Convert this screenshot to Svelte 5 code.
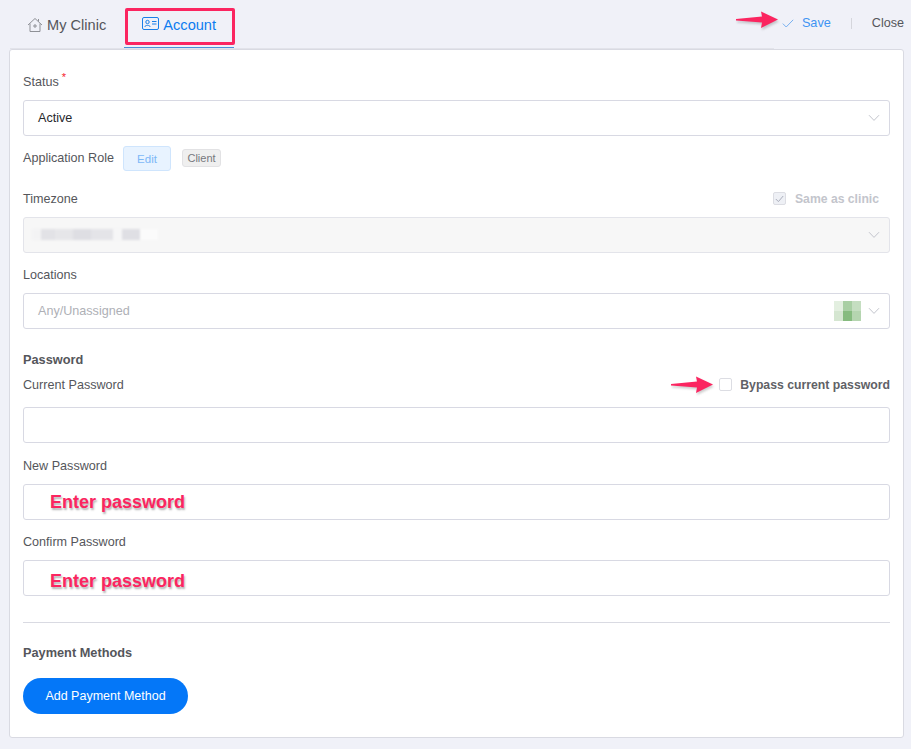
<script>
  const mosaic = ['#e3efe0', '#a9cfa4', '#c5dec1', '#d5e6d1', '#86bb7f', '#b5d5b0'];
  const redact = [
    { w: 9, c: '#f3f3f4' }, { w: 14, c: '#e2e2e6' }, { w: 18, c: '#e6e6e9' }, { w: 18, c: '#dedee3' },
    { w: 22, c: '#e4e4e8' }, { w: 9, c: '#f6f6f7' }, { w: 18, c: '#dfdfe4' }, { w: 18, c: '#fbfbfb' }
  ];
</script>

{#snippet chevron()}
  <svg class="chevron" width="12" height="8" viewBox="0 0 12 8"><path d="M1 1.2 L6 6.4 L11 1.2" fill="none" stroke="#c3c5cd" stroke-width="1"/></svg>
{/snippet}

{#snippet arrow()}
  <svg class="arrow" width="42" height="17" viewBox="0 0 42 17">
    <path d="M0 8 L26 5.5 L25 0.5 L42 8.5 L25 17 L26 11.5 L0 9.5 Z" fill="#fb2560"/>
  </svg>
{/snippet}

<div class="page">
  <header class="topbar">
    <nav class="tabs">
      <div class="tab">
        <svg width="16" height="16" viewBox="0 0 16 16" fill="none" stroke="#8f9197" stroke-width="1">
          <path d="M1 8 L8 1.5 L15 8 M3 6.5 V14.5 H13 V6.5 M11.5 2 V4.5"/>
          <path d="M8 7 V11 M6 9 H10"/>
        </svg>
        <span>My Clinic</span>
      </div>
      <div class="tab active">
        <svg width="17" height="13" viewBox="0 0 17 13" fill="none" stroke="#1a7fe8" stroke-width="1">
          <rect x="0.5" y="0.5" width="16" height="12" rx="1.5"/>
          <circle cx="5.5" cy="5" r="1.7"/>
          <path d="M2.8 10 C3 7.8 8 7.8 8.2 10 M10 4.5 H14.5 M10 7 H14.5"/>
        </svg>
        <span>Account</span>
        <div class="highlight"></div>
      </div>
    </nav>
    <div class="actions">
      <div class="save-arrow">{@render arrow()}</div>
      <svg width="12" height="9" viewBox="0 0 12 9"><path d="M0.8 4.6 L4.2 8 L11.2 0.8" fill="none" stroke="#78b0f0" stroke-width="1"/></svg>
      <span class="save">Save</span>
      <span class="divider"></span>
      <span class="close">Close</span>
    </div>
  </header>

  <main class="card">
    <div class="label status-label">Status<sup>*</sup></div>
    <div class="field">
      <span class="value">Active</span>
      {@render chevron()}
    </div>

    <div class="role-row">
      <span class="label">Application Role</span>
      <span class="edit-btn">Edit</span>
      <span class="client-tag">Client</span>
    </div>

    <div class="label-row tz-row">
      <span class="label">Timezone</span>
      <div class="check-wrap">
        <span class="box checked">
          <svg width="9" height="8" viewBox="0 0 9 8"><path d="M0.8 4 L3.4 6.6 L8.2 1" fill="none" stroke="#a9adbb" stroke-width="1"/></svg>
        </span>
        <span class="same">Same as clinic</span>
      </div>
    </div>
    <div class="field disabled">
      <div class="redacted">
        {#each redact as r}
          <i style="width:{r.w}px;background:{r.c}"></i>
        {/each}
      </div>
      {@render chevron()}
    </div>

    <div class="label loc-label">Locations</div>
    <div class="field">
      <span class="placeholder">Any/Unassigned</span>
      <div class="field-end">
        <div class="mosaic">
          {#each mosaic as c}
            <i style="background:{c}"></i>
          {/each}
        </div>
        {@render chevron()}
      </div>
    </div>

    <div class="heading pw-heading">Password</div>
    <div class="label-row cur-row">
      <span class="label">Current Password</span>
      <div class="check-wrap bypass">
        <div class="bypass-arrow">{@render arrow()}</div>
        <span class="box"></span>
        <span class="bypass-text">Bypass current password</span>
      </div>
    </div>
    <div class="field"></div>

    <div class="label pw-label">New Password</div>
    <div class="field"><span class="note">Enter password</span></div>

    <div class="label pw-label confirm">Confirm Password</div>
    <div class="field"><span class="note low">Enter password</span></div>

    <hr />

    <div class="heading">Payment Methods</div>
    <button class="add-btn">Add Payment Method</button>
  </main>
</div>

<style>
  :global(body) {
    margin: 0;
    background: #f0f1f8;
  }

  .page {
    height: 749px;
    font-family: "Liberation Sans", Arial, sans-serif;
    font-size: 13px;
    color: #55565b;
    overflow: hidden;
  }

  .topbar {
    display: flex;
    justify-content: space-between;
    height: 49px;
    padding: 0 7px 0 27px;
    box-sizing: border-box;
  }

  .tabs {
    display: flex;
  }

  .tab {
    display: flex;
    align-items: flex-start;
    gap: 4px;
    height: 48px;
    padding-top: 17px;
    box-sizing: border-box;
    font-size: 14.6px;
    color: #55565b;
  }

  .tab.active {
    position: relative;
    margin-left: 18px;
    width: 110px;
    justify-content: center;
    color: #0d7cf0;
    border-bottom: 1px solid #4a90d9;
  }

  .tab svg {
    flex: none;
  }

  .highlight {
    position: absolute;
    left: 1px;
    top: 8px;
    width: 110px;
    height: 37px;
    box-sizing: border-box;
    border: 3px solid #fb2560;
    border-radius: 2px;
  }

  .actions {
    display: flex;
    align-items: center;
    height: 46px;
    position: relative;
  }

  .arrow {
    display: block;
    filter: drop-shadow(1px 2px 1px rgba(60, 60, 60, 0.25));
  }

  .save-arrow {
    position: absolute;
    left: -46px;
    top: 11px;
  }

  .save {
    margin-left: 8px;
    color: #3f94f3;
    font-size: 12.7px;
  }

  .divider {
    width: 1px;
    height: 11px;
    background: #d5d6dc;
    margin: 0 20px;
  }

  .close {
    font-size: 12.6px;
    color: #55565b;
  }

  .card {
    position: relative;
    margin: 0 7px 0 9px;
    height: 689px;
    box-sizing: border-box;
    background: #fff;
    border: 1px solid #d9dae2;
    border-radius: 3px;
    padding: 24px 13px 0;
  }

  /* tab strip rule, sits just over the card edge */
  .card::before {
    content: "";
    position: absolute;
    left: 0;
    top: -2px;
    width: 764px;
    height: 1px;
    background: #e2e3ea;
  }

  .label {
    font-size: 12.6px;
    line-height: 17px;
    color: #55565b;
  }

  .status-label {
    height: 26px;
  }

  sup {
    color: #f5222d;
    font-size: 11px;
    line-height: 0;
    margin-left: 3px;
  }

  .field {
    height: 36px;
    box-sizing: border-box;
    border: 1px solid #d8d9e3;
    border-radius: 3px;
    display: flex;
    align-items: center;
    justify-content: space-between;
    padding: 0 9px 1px 14px;
    background: #fff;
    position: relative;
  }

  .field.disabled {
    background: #f7f7f7;
    border-color: #e3e4ea;
  }

  .chevron {
    flex: none;
    margin-left: auto;
  }

  .value {
    color: #26272b;
    font-size: 12.6px;
  }

  .placeholder {
    color: #aeb0b6;
    font-size: 12.6px;
  }

  .field-end {
    display: flex;
    align-items: center;
    gap: 7px;
    margin-left: auto;
  }

  .mosaic {
    display: grid;
    grid-template-columns: 9px 9px 9px;
    grid-template-rows: 10px 10px;
    filter: blur(0.4px);
  }

  .mosaic i {
    display: block;
  }

  .redacted {
    display: flex;
    height: 11px;
    margin-left: -6px;
    filter: blur(1px);
  }

  .redacted i {
    display: block;
  }

  .role-row {
    display: flex;
    align-items: center;
    height: 25px;
    margin-top: 10px;
  }

  .role-row .label {
    line-height: 15px;
    margin-bottom: 1px;
  }

  .edit-btn {
    margin-left: 9px;
    width: 48px;
    height: 25px;
    box-sizing: border-box;
    display: flex;
    align-items: center;
    justify-content: center;
    background: #e8f3ff;
    border: 1px solid #cfe5fd;
    border-radius: 3px;
    color: #7db8f7;
    font-size: 11.5px;
  }

  .client-tag {
    margin: 0 0 1px 11px;
    height: 18px;
    width: 39px;
    box-sizing: border-box;
    display: flex;
    align-items: center;
    justify-content: center;
    background: #efefef;
    border: 1px solid #e2e2e4;
    border-radius: 3px;
    color: #77787d;
    font-size: 11px;
  }

  .label-row {
    display: flex;
    align-items: center;
    justify-content: space-between;
  }

  .label-row .label {
    margin-top: 2px;
  }

  .tz-row {
    margin-top: 20px;
    margin-bottom: 11px;
    height: 15px;
    padding-right: 11px;
  }

  .check-wrap {
    display: flex;
    align-items: center;
    position: relative;
  }

  .box {
    width: 13px;
    height: 13px;
    box-sizing: border-box;
    border: 1px solid #dcdde3;
    border-radius: 2px;
    background: #fff;
    display: flex;
    align-items: center;
    justify-content: center;
  }

  .box.checked {
    background: #eef0f5;
    margin-right: 9px;
  }

  .same {
    font-size: 12.2px;
    font-weight: bold;
    color: #c3c5cc;
  }

  .loc-label {
    margin-top: 14px;
    height: 26px;
  }

  .heading {
    font-size: 12.75px;
    font-weight: bold;
    line-height: 15px;
    color: #55565b;
  }

  .pw-heading {
    margin-top: 23px;
  }

  .cur-row {
    margin-top: 10px;
    margin-bottom: 15px;
    height: 15px;
  }

  .bypass .box {
    margin-right: 8px;
  }

  .bypass-text {
    font-size: 12.25px;
    font-weight: bold;
    color: #606166;
  }

  .bypass-arrow {
    position: absolute;
    left: -48px;
    top: -2px;
  }

  .pw-label {
    margin-top: 15px;
    height: 26px;
  }

  .pw-label.confirm {
    margin-top: 14px;
  }

  .note {
    position: absolute;
    left: 26px;
    top: 6px;
    color: #fb2560;
    font-size: 18px;
    font-weight: bold;
    line-height: 22px;
    text-shadow: 1px 2px 2px rgba(60, 60, 60, 0.4);
  }

  .note.low {
    top: 9px;
  }

  hr {
    border: 0;
    border-top: 1px solid #d9dae2;
    margin: 26px 0 22px;
  }

  .add-btn {
    display: block;
    margin-top: 18px;
    width: 165px;
    height: 36px;
    border: 0;
    border-radius: 18px;
    background: #0477f8;
    color: #fff;
    font-family: inherit;
    font-size: 12.5px;
    padding: 0;
  }
</style>
